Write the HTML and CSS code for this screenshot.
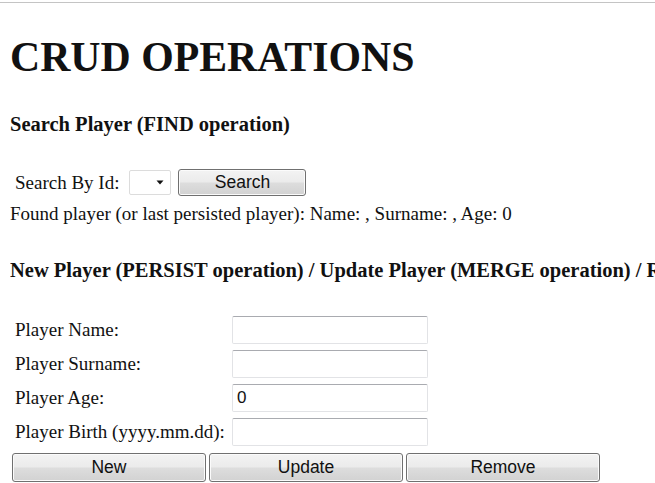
FILE: index.html
```html
<!DOCTYPE html>
<html>
<head>
<meta charset="utf-8">
<title>CRUD Operations</title>
<link rel="stylesheet" href="styles.css">
</head>
<body>
<div class="topline"></div>
<div class="page">
  <h1 class="title">CRUD OPERATIONS</h1>
  <h3 class="section search-head">Search Player (FIND operation)</h3>
  <div class="search-row">
    <span class="label">Search By Id:</span>
    <div class="select">
      <svg class="arrow" width="8" height="5" viewBox="0 0 8 5"><path d="M0.5 0.5 L7.5 0.5 L4 4.5 Z" fill="#111"/></svg>
    </div>
    <button class="btn btn-search">Search</button>
  </div>
  <div class="found">Found player (or last persisted player): Name: , Surname: , Age: 0</div>
  <div class="clip">
    <h3 class="section edit-head">New Player (PERSIST operation) / Update Player (MERGE operation) / Remove Player (REMOVE operation)</h3>
  </div>
  <div class="form">
    <div class="form-row"><span class="label form-label">Player Name:</span><div class="input"></div></div>
    <div class="form-row"><span class="label form-label">Player Surname:</span><div class="input"></div></div>
    <div class="form-row"><span class="label form-label">Player Age:</span><div class="input">0</div></div>
    <div class="form-row"><span class="label form-label">Player Birth (yyyy.mm.dd):</span><div class="input"></div></div>
  </div>
  <div class="actions">
    <button class="btn btn-action">New</button>
    <button class="btn btn-action">Update</button>
    <button class="btn btn-action">Remove</button>
  </div>
</div>
</body>
</html>
```

FILE: styles.css
```css
html, body {
  margin: 0;
  padding: 0;
  background: #ffffff;
  overflow: hidden;
}
body {
  width: 655px;
  height: 483px;
  font-family: "Liberation Serif", "Times New Roman", serif;
  color: #111;
}
.topline {
  margin-top: 2px;
  height: 1px;
  background: #c4c4c4;
}
.page {
  padding-left: 10px;
}
.title {
  margin: 30px 0 0 0;
  font-size: 41.8px;
  line-height: 48px;
  font-weight: bold;
}
.section {
  margin: 0;
  font-size: 20.5px;
  line-height: 24px;
  font-weight: bold;
  white-space: nowrap;
}
.search-head {
  margin-top: 31px;
}
.search-row {
  margin-top: 33px;
  height: 27px;
  display: flex;
  align-items: center;
  padding-left: 5px;
}
.label {
  font-size: 19px;
  line-height: 27px;
}
.select {
  margin-left: 10px;
  width: 34px;
  height: 23px;
  border: 1px solid #dcdcdc;
  border-radius: 2px;
  background: #fff;
  display: flex;
  align-items: center;
  justify-content: flex-end;
  padding-right: 6px;
  box-sizing: content-box;
}
.arrow {
  display: block;
}
.btn {
  font-family: "Liberation Sans", Arial, sans-serif;
  font-size: 17.5px;
  color: #111;
  border: 1px solid #707070;
  border-radius: 3px;
  background: linear-gradient(#f3f3f3 0%, #ebebeb 48%, #dddddd 52%, #d2d2d2 100%);
  box-shadow: inset 0 0 0 1px #fbfbfb;
  padding: 0;
  margin: 0;
}
.btn-search {
  margin-left: 7px;
  width: 128px;
  height: 27px;
}
.found {
  margin-top: 7px;
  font-size: 19px;
  line-height: 22px;
}
.clip {
  overflow: hidden;
  width: 645px;
}
.edit-head {
  margin-top: 33px;
}
.form {
  margin-top: 34px;
  display: flex;
  flex-direction: column;
  gap: 6px;
}
.form-row {
  display: flex;
  align-items: center;
  height: 28px;
}
.form-label {
  width: 217px;
  padding-left: 5px;
  line-height: 28px;
}
.input {
  width: 190px;
  height: 26px;
  border: 1px solid #e2e3e6;
  border-top-color: #a9abb0;
  border-radius: 2px;
  background: #fff;
  font-family: "Liberation Sans", Arial, sans-serif;
  font-size: 17px;
  line-height: 26px;
  padding-left: 4px;
  box-sizing: content-box;
}
.actions {
  margin-top: 7px;
  padding-left: 2px;
  display: flex;
  gap: 3px;
}
.btn-action {
  width: 194px;
  height: 29px;
}
```
